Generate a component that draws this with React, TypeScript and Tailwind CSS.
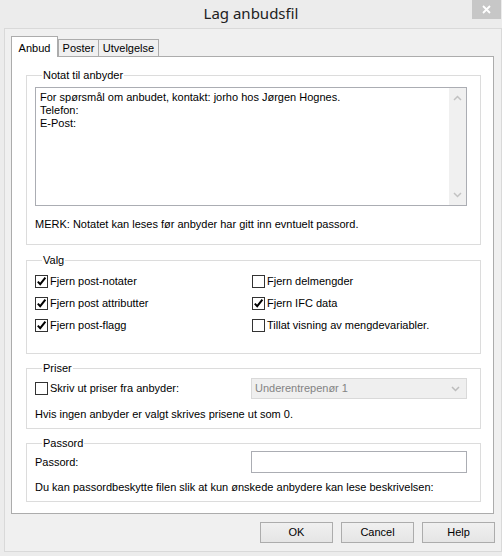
import React from 'react';

const Check: React.FC<{ checked?: boolean; label: string }> = ({ checked, label }) => (
  <label className="flex items-center gap-[2px]">
    <span className="flex h-[13px] w-[13px] shrink-0 items-center justify-center border border-[#333] bg-white">
      {checked && (
        <svg width="11" height="11" viewBox="0 0 11 11">
          <path d="M1.8 5.6 L4.2 8.2 L9.4 1.6" stroke="#000" strokeWidth="2" fill="none" />
        </svg>
      )}
    </span>
    <span>{label}</span>
  </label>
);

const Group: React.FC<{ title: string; className?: string; children: React.ReactNode }> = ({
  title,
  className = '',
  children,
}) => (
  <fieldset className={`ml-[14px] mr-[12px] border border-[#dcdcdc] pl-[8px] ${className}`}>
    <legend className="ml-[7px] px-[1px] leading-[14px]">{title}</legend>
    {children}
  </fieldset>
);

const Chevron: React.FC<{ up?: boolean; color?: string }> = ({ up, color = '#c2c2c2' }) => (
  <svg width="9" height="6" viewBox="0 0 9 6">
    <path d={up ? 'M1 5 L4.5 1.5 L8 5' : 'M1 1 L4.5 4.5 L8 1'} stroke={color} strokeWidth="1.5" fill="none" />
  </svg>
);

const App: React.FC = () => {
  return (
    <div className="h-[556px] w-[502px] overflow-hidden bg-[#ececec] font-['Liberation_Sans',Arial,sans-serif] text-[11px] text-black">
      {/* title bar */}
      <div className="grid h-[28px] grid-cols-[1fr_auto_1fr]">
        <div />
        <div className="pt-[3px] font-['Noto_Sans',sans-serif] text-[15px] leading-[20px] text-[#222]">
          Lag anbudsfil
        </div>
        <div className="flex justify-end">
          <div className="mr-[1px] flex h-[19px] w-[29px] items-center justify-center bg-[#c7c7c7]">
            <svg width="9" height="9" viewBox="0 0 9 9">
              <path d="M1 1 L8 8 M8 1 L1 8" stroke="#fff" strokeWidth="1.8" />
            </svg>
          </div>
        </div>
      </div>

      {/* client area */}
      <div className="ml-[4px] h-[524px] w-[498px] border border-[#d9d9d9] bg-[#f0f0f0] pt-[7px]">
        {/* tabs */}
        <div className="ml-[6px] flex h-[20px] items-end">
          <div className="relative z-10 -mb-px flex h-[21px] w-[47px] items-start justify-center border-x border-t border-[#acacac] bg-white pt-[3px]">
            Anbud
          </div>
          <div className="flex h-[17px] w-[41px] items-center justify-center border-x border-t border-[#acacac] bg-[#f0f0f0]">
            Poster
          </div>
          <div className="flex h-[17px] w-[60px] items-center justify-center border-r border-t border-[#acacac] bg-[#f0f0f0]">
            Utvelgelse
          </div>
        </div>

        {/* tab panel */}
        <div className="ml-[6px] h-[458px] w-[483px] border border-[#acacac] bg-white pt-[11px]">
          <Group title="Notat til anbyder" className="pb-[13px]">
            <div className="mt-[5px] flex h-[119px] w-[432px] border border-[#abadb3] bg-white">
              <div className="flex-1 pl-[4px] pt-[3px] leading-[13px]">
                <div>For spørsmål om anbudet, kontakt: jorho hos Jørgen Hognes.</div>
                <div>Telefon:</div>
                <div>E-Post:</div>
              </div>
              <div className="flex w-[17px] flex-col items-center justify-between bg-[#f0f0f0] py-[7px]">
                <Chevron up />
                <Chevron />
              </div>
            </div>
            <div className="mt-[11px] leading-[14px]">
              MERK: Notatet kan leses før anbyder har gitt inn evntuelt passord.
            </div>
          </Group>

          <Group title="Valg" className="mt-[8px] pb-[17px]">
            <div className="mt-[3px] grid grid-cols-[217px_1fr] auto-rows-[22px] items-center">
              <Check checked label="Fjern post-notater" />
              <Check label="Fjern delmengder" />
              <Check checked label="Fjern post attributter" />
              <Check checked label="Fjern IFC data" />
              <Check checked label="Fjern post-flagg" />
              <Check label="Tillat visning av mengdevariabler." />
            </div>
          </Group>

          <Group title="Priser" className="mt-[7px] pb-[7px]">
            <div className="mt-[3px] flex h-[21px] items-center">
              <div className="w-[216px]">
                <Check label="Skriv ut priser fra anbyder:" />
              </div>
              <div className="flex h-[21px] w-[216px] items-center justify-between border border-[#d9d9d9] bg-[#efefef] pl-[3px] pr-[6px] text-[#838383]">
                <span>Underentrepenør 1</span>
                <Chevron color="#bcbcbc" />
              </div>
            </div>
            <div className="mt-[8px] leading-[14px]">Hvis ingen anbyder er valgt skrives prisene ut som 0.</div>
          </Group>

          <Group title="Passord" className="mt-[7px] pb-[7px]">
            <div className="mt-[1px] flex h-[22px] items-center">
              <div className="w-[216px]">Passord:</div>
              <div className="h-[22px] w-[216px] border border-[#abadb3] bg-white" />
            </div>
            <div className="mt-[7px] leading-[14px]">
              Du kan passordbeskytte filen slik at kun ønskede anbydere kan lese beskrivelsen:
            </div>
          </Group>
        </div>

        {/* buttons */}
        <div className="mt-[8px] flex justify-end gap-[8px] pr-[6px]">
          {['OK', 'Cancel', 'Help'].map((b) => (
            <button
              key={b}
              className="h-[21px] w-[73px] border border-[#acacac] bg-gradient-to-b from-[#f0f0f0] to-[#e5e5e5] text-[11px] leading-[19px] text-black"
            >
              {b}
            </button>
          ))}
        </div>
      </div>
    </div>
  );
};

export default App;
